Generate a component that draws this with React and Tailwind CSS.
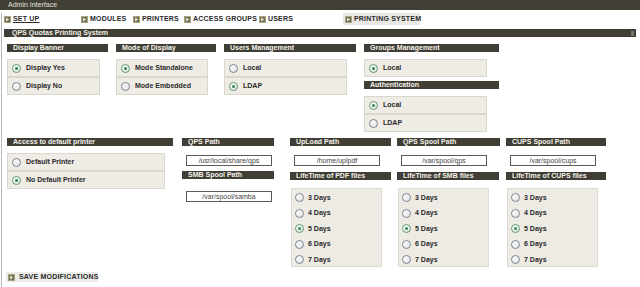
import React from "react";

const Icon = () => (
  <span className="inline-flex w-[7px] h-[7px] bg-[#6f6d55] border border-[#a9a47a] items-center justify-center shrink-0">
    <svg width="5" height="5" viewBox="0 0 5 5"><path d="M1.2 0.6 L4 2.5 L1.2 4.4 Z" fill="#f2f0e4" /></svg>
  </span>
);

const Header = ({ children, w }) => (
  <div className={`h-[8px] bg-[#403e35] text-[#f4f2ec] text-[7px] font-bold leading-[8px] pl-[6px] whitespace-nowrap overflow-hidden ${w}`}>{children}</div>
);

const Radio = ({ checked }) => (
  <span className={`inline-flex w-[9px] h-[9px] rounded-full border items-center justify-center shrink-0 bg-gradient-to-br from-white to-[#e2e2e2] ${checked ? "border-[#5f9a78]" : "border-[#7a8494]"}`}>
    {checked && <span className="w-[3px] h-[3px] rounded-full bg-[#2f8a52]" />}
  </span>
);

const OptRow = ({ label, checked }) => (
  <div className="h-[18px] border border-[#dad7cf] bg-[#efece6] flex items-center pl-[4px] gap-[5px] text-[7px] font-bold text-[#2a2a2a]">
    <Radio checked={checked} />
    <span>{label}</span>
  </div>
);

const Col1 = ({ title, hw, bw, opts, children }) => (
  <div className="flex flex-col">
    <Header w={hw}>{title}</Header>
    <div className={`mt-[7px] ${bw}`}>
      {opts.map((o) => (
        <OptRow key={o[0]} label={o[0]} checked={o[1]} />
      ))}
    </div>
    {children}
  </div>
);

const PathInput = ({ value }) => (
  <div className="ml-[4px] w-[86px] h-[11px] border border-[#5a5a5a] bg-white text-[7px] leading-[9px] text-center text-[#444]">{value}</div>
);

const Days = ({ checkedIdx }) => (
  <div className="mt-[8px] ml-[1px] w-[91px] h-[79px] bg-[#eeebe5] border border-[#dedbd3] pt-[1px] pl-[3px]">
    {["3 Days", "4 Days", "5 Days", "6 Days", "7 Days"].map((d, i) => (
      <div key={d} className="h-[15.5px] flex items-center gap-[4px] text-[7px] font-bold text-[#2a2a2a]">
        <Radio checked={i === checkedIdx} />
        <span>{d}</span>
      </div>
    ))}
  </div>
);

export default function App() {
  const tabs = [
    ["SET UP", "w-[77px]", true],
    ["MODULES", "w-[52px]"],
    ["PRINTERS", "w-[51px]"],
    ["ACCESS GROUPS", "w-[75px]"],
    ["USERS", "w-[84px]"],
  ];
  return (
    <div className="w-[640px] h-[287px] bg-white overflow-hidden whitespace-nowrap font-['Liberation_Sans',Arial,sans-serif]">
      <div className="h-[10px] bg-[#403e35] text-[#e4e2da] text-[7px] leading-[10px] pl-[8px]">Admin Interface</div>
      <div className="ml-[1px] border-l border-[#b9b9b9] h-[277px]">
        {/* tabs */}
        <div className="mt-[3px] h-[12px] flex items-center pl-[2px] text-[7px] font-bold text-[#2a2a2a] tracking-[0.2px]">
          {tabs.map(([t, w, u]) => (
            <div key={t} className={`flex items-center gap-[2px] shrink-0 ${w}`}>
              <Icon />
              <span className={u ? "underline" : ""}>{t}</span>
            </div>
          ))}
          <div className="flex items-center gap-[2px] shrink-0 w-[77px] h-[12px] bg-[#e9e8e4] pl-[2px]">
            <Icon />
            <span>PRINTING SYSTEM</span>
          </div>
        </div>
        {/* section bar */}
        <div className="mt-[4px] ml-[2px] mr-[4px] h-[8px] bg-[#403e35] text-[#f0eee6] text-[7px] font-bold leading-[8px] pl-[8px] flex justify-between pr-[2px]">
          <span>QPS Quotas Printing System</span>
          <span className="w-[3px] h-[5px] mt-[2px] bg-[#77756a]" />
        </div>
        {/* row 1 */}
        <div className="mt-[7px] flex pl-[5px]">
          <Col1 title="Display Banner" hw="w-[101px]" bw="w-[93px]" opts={[["Display Yes", true], ["Display No", false]]} />
          <div className="ml-[8px]">
            <Col1 title="Mode of Display" hw="w-[100px]" bw="w-[92px]" opts={[["Mode Standalone", true], ["Mode Embedded", false]]} />
          </div>
          <div className="ml-[8px]">
            <Col1 title="Users Management" hw="w-[132px]" bw="w-[123px]" opts={[["Local", false], ["LDAP", true]]} />
          </div>
          <div className="ml-[8px]">
            <Col1 title="Groups Management" hw="w-[135px]" bw="w-[123px]" opts={[["Local", true]]}>
              <div className="mt-[4px]"><Header w="w-[135px]">Authentication</Header></div>
              <div className="mt-[7px] w-[123px]">
                <OptRow label="Local" checked />
                <OptRow label="LDAP" checked={false} />
              </div>
            </Col1>
          </div>
        </div>
        {/* row 2 */}
        <div className="mt-[6px] flex pl-[5px]">
          <div className="flex flex-col">
            <Header w="w-[166px]">Access to default printer</Header>
            <div className="mt-[7px] w-[158px]">
              <OptRow label="Default Printer" checked={false} />
              <OptRow label="No Default Printer" checked />
            </div>
          </div>
          <div className="ml-[9px] flex flex-col">
            <Header w="w-[92px]">QPS Path</Header>
            <div className="mt-[9px]"><PathInput value="/usr/local/share/qps" /></div>
            <div className="mt-[5px]"><Header w="w-[92px]">SMB Spool Path</Header></div>
            <div className="mt-[12px]"><PathInput value="/var/spool/samba" /></div>
          </div>
          <div className="ml-[16px] flex flex-col">
            <Header w="w-[101px]">UpLoad Path</Header>
            <div className="mt-[9px]"><PathInput value="/home/uplpdf" /></div>
            <div className="mt-[6px]"><Header w="w-[101px]">LifeTime of PDF files</Header></div>
            <Days checkedIdx={2} />
          </div>
          <div className="ml-[6px] flex flex-col">
            <Header w="w-[103px]">QPS Spool Path</Header>
            <div className="mt-[9px]"><PathInput value="/var/spool/qps" /></div>
            <div className="mt-[6px]"><Header w="w-[102px]">LifeTime of SMB files</Header></div>
            <Days checkedIdx={2} />
          </div>
          <div className="ml-[6px] flex flex-col">
            <Header w="w-[100px]">CUPS Spool Path</Header>
            <div className="mt-[9px]"><PathInput value="/var/spool/cups" /></div>
            <div className="mt-[6px]"><Header w="w-[100px]">LifeTime of CUPS files</Header></div>
            <Days checkedIdx={2} />
          </div>
        </div>
        {/* save */}
        <div className="mt-[5px] ml-[4px] w-[92px] h-[10px] bg-[#ecebe7] flex items-center gap-[4px] pl-[2px] text-[7px] font-bold text-[#2a2a2a] tracking-[0.2px]">
          <Icon />
          <span>SAVE MODIFICATIONS</span>
        </div>
      </div>
    </div>
  );
}
